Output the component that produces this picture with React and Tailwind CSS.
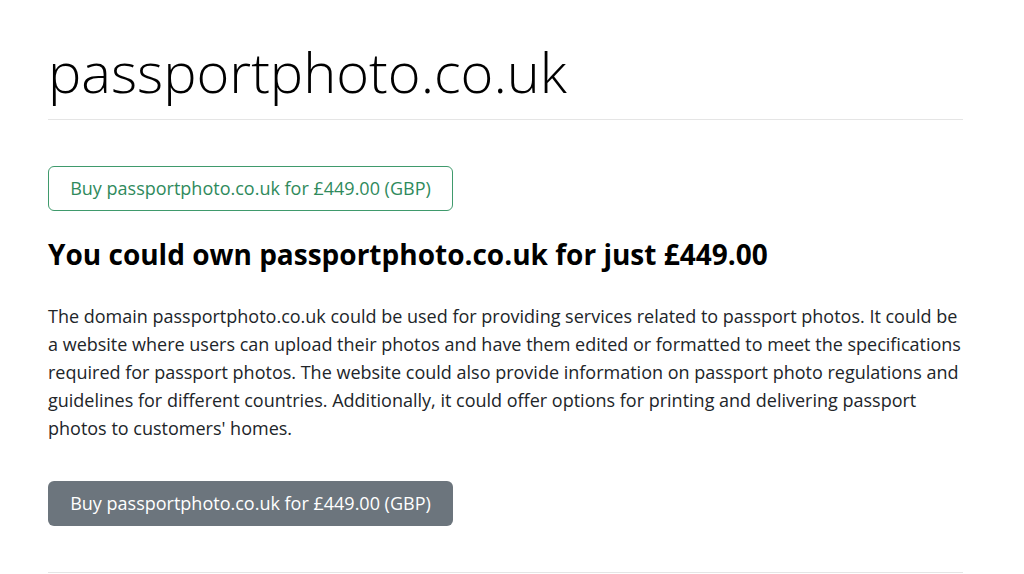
export default function App() {
  const font = { fontFamily: '"Open Sans", "Noto Sans", sans-serif' };
  return (
    <div className="min-h-screen bg-white text-[#212529]" style={font}>
      <div className="ml-[48px] w-[915px] flex flex-col">
        <h1 className="pt-[35px] pb-[12px] text-[56px] leading-[72px] font-light text-black">
          passportphoto.co.uk
        </h1>
        <hr className="border-t border-[#e5e5e5]" />
        <div className="pt-[46px]">
          <button className="h-[45px] w-[405px] rounded-[6px] border border-[#3f9a6c] text-[#2f8a5c] text-[18px]">
            Buy passportphoto.co.uk for £449.00 (GBP)
          </button>
        </div>
        <h2 className="mt-[23px] text-[28px] leading-[40px] font-bold text-black">
          You could own passportphoto.co.uk for just £449.00
        </h2>
        <p className="mt-[28px] text-[18px] leading-[28px] text-[#212529]">
          The domain passportphoto.co.uk could be used for providing services related to passport photos. It could be a website where users can upload their photos and have them edited or formatted to meet the specifications required for passport photos. The website could also provide information on passport photo regulations and guidelines for different countries. Additionally, it could offer options for printing and delivering passport photos to customers' homes.
        </p>
        <div className="pt-[39px]">
          <button className="h-[45px] w-[405px] rounded-[6px] bg-[#6c757d] text-white text-[18px]">
            Buy passportphoto.co.uk for £449.00 (GBP)
          </button>
        </div>
        <hr className="mt-[46px] border-t border-[#e5e5e5]" />
      </div>
    </div>
  );
}
